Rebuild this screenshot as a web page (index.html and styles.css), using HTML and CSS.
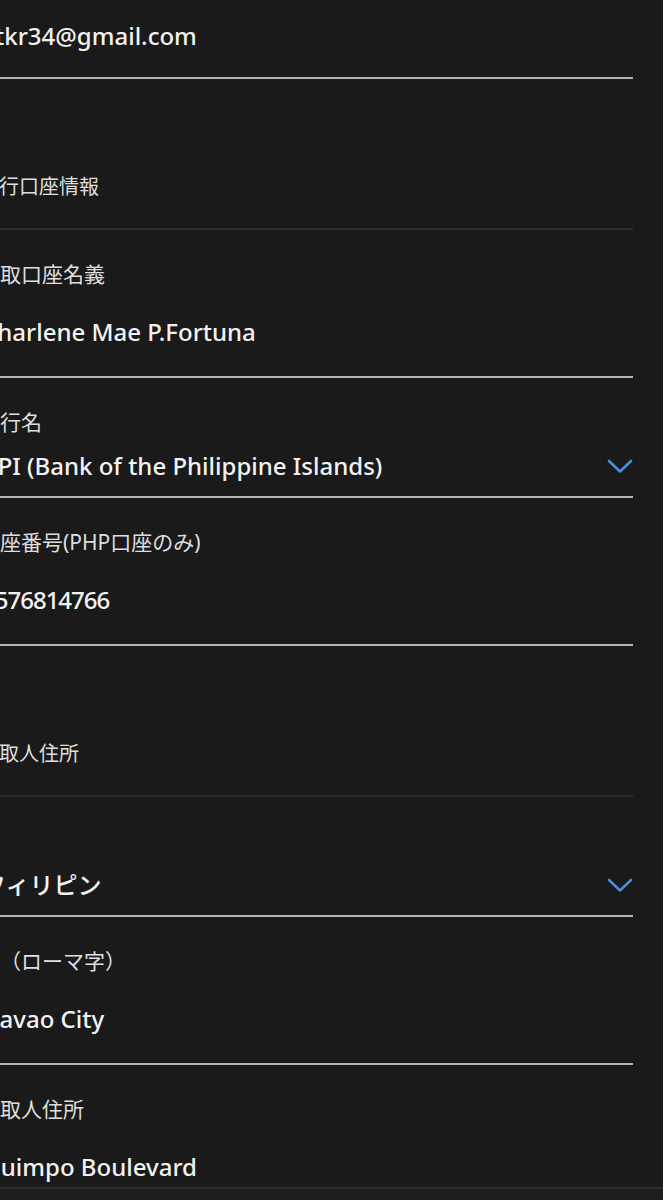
FILE: index.html
```html
<!DOCTYPE html>
<html lang="ja">
<head>
<meta charset="utf-8">
<title>受取口座情報</title>
<link rel="stylesheet" href="styles.css">
</head>
<body>
<form class="form">
  <div class="field field-email">
    <div class="value">xtkr34@gmail.com</div>
  </div>

  <div class="section"><div class="section-title">銀行口座情報</div></div>

  <div class="field">
    <div class="label">受取口座名義</div>
    <div class="value">Charlene Mae P.Fortuna</div>
  </div>

  <div class="field select">
    <div class="label">銀行名</div>
    <div class="value">BPI (Bank of the Philippine Islands)
      <svg class="chev" viewBox="0 0 26 15" width="26" height="15"><path d="M2 2 L13 12.5 L24 2" fill="none" stroke="#4a8fd8" stroke-width="2.6" stroke-linecap="round" stroke-linejoin="round"/></svg>
    </div>
  </div>

  <div class="field">
    <div class="label">口座番号(PHP口座のみ)</div>
    <div class="value num">3576814766</div>
  </div>

  <div class="section"><div class="section-title">受取人住所</div></div>

  <div class="field select">
    <div class="label"></div>
    <div class="value">フィリピン
      <svg class="chev" viewBox="0 0 26 15" width="26" height="15"><path d="M2 2 L13 12.5 L24 2" fill="none" stroke="#4a8fd8" stroke-width="2.6" stroke-linecap="round" stroke-linejoin="round"/></svg>
    </div>
  </div>

  <div class="field">
    <div class="label">市（ローマ字）</div>
    <div class="value">Davao City</div>
  </div>

  <div class="field">
    <div class="label">受取人住所</div>
    <div class="value">Quimpo Boulevard</div>
  </div>
</form>
<div class="footer"></div>
</body>
</html>
```

FILE: styles.css
```css
html, body {
  margin: 0;
  padding: 0;
  background: #1a1a1a;
}
body {
  font-family: "Noto Sans", "Noto Sans CJK JP", sans-serif;
  color: #f0f0f0;
  overflow: hidden;
}
.form {
  margin-left: -21px;
  margin-right: 30px;
}
.field {
  padding: 29px 0 22px;
  border-bottom: 2px solid #b3b3b3;
}
.field-email {
  padding: 14px 0 19px;
}
.label {
  height: 30px;
  line-height: 30px;
  font-size: 21px;
  color: #dedede;
  white-space: nowrap;
}
.value {
  margin-top: 21px;
  height: 44px;
  line-height: 44px;
  font-size: 24px;
  font-weight: 500;
  color: #f2f2f2;
  padding-left: 3px;
  white-space: nowrap;
  display: flex;
  align-items: center;
  justify-content: space-between;
}
.num {
  letter-spacing: -1px;
}
.field-email .value {
  margin-top: 0;
}
.select {
  padding-bottom: 8px;
}
.select .value {
  margin-top: 7px;
}
.chev {
  flex: none;
}
.section {
  padding: 93px 0 26px;
  border-bottom: 2px solid #2d2d2d;
}
.section-title {
  height: 30px;
  line-height: 30px;
  font-size: 20px;
  color: #dedede;
  white-space: nowrap;
}
.footer {
  position: fixed;
  left: 0;
  right: 0;
  bottom: 0;
  height: 11px;
  background: #1f1f1f;
  border-top: 2px solid #2c2c2c;
}
```
